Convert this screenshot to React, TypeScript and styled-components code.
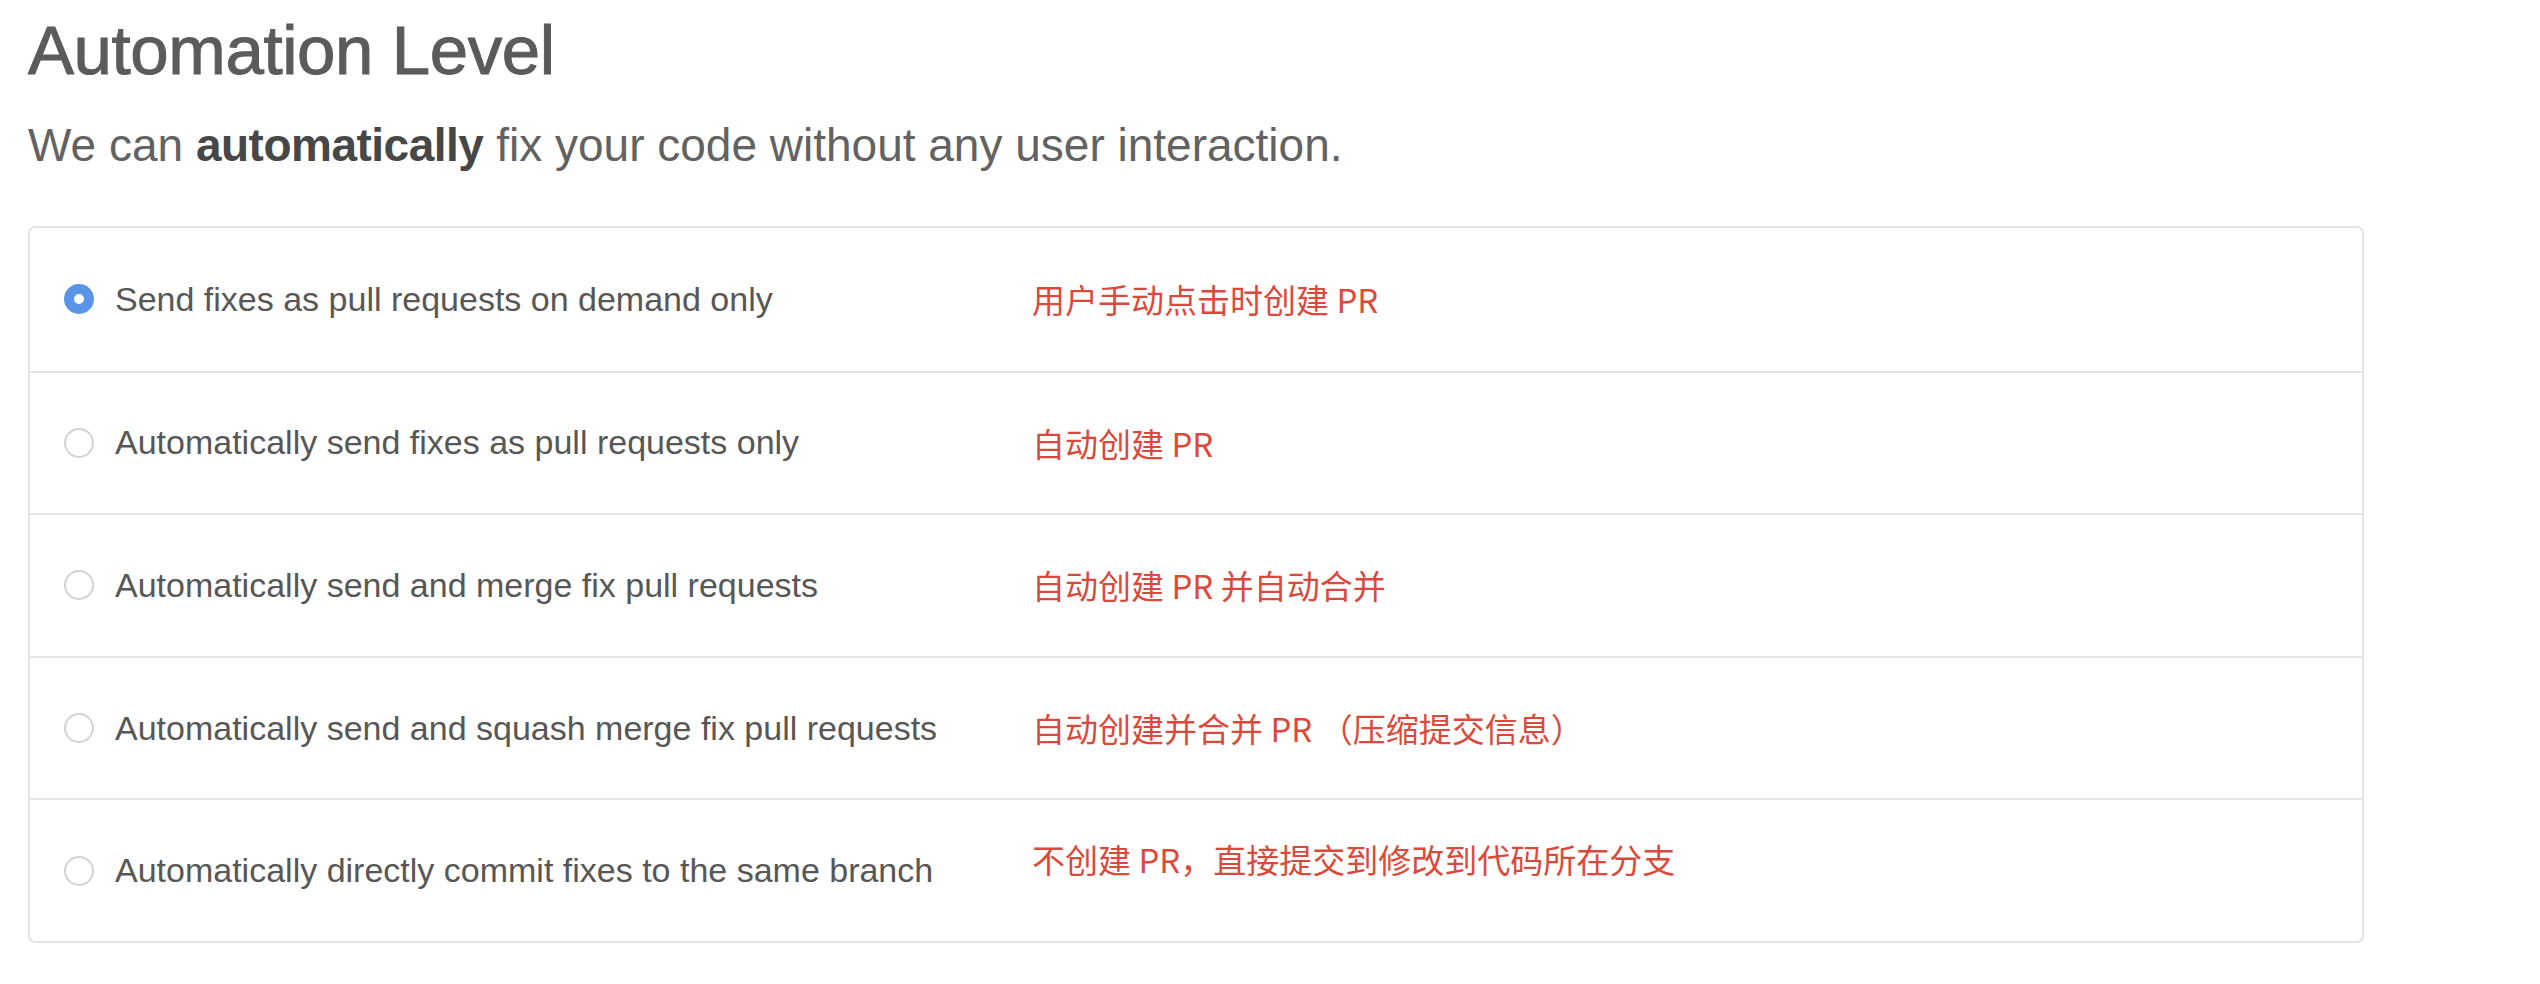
import styled, {createGlobalStyle} from "styled-components";

const GlobalStyle = createGlobalStyle`
    * {
        box-sizing: border-box;
    }

    body {
        margin: 0;
        background: #ffffff;
        font-family: "Liberation Sans", Arial, sans-serif;
    }
`

type Option = {
    label: string
    note: string
    checked?: boolean
    raised?: boolean
}

const options: Option[] = [
    {label: 'Send fixes as pull requests on demand only', note: '用户手动点击时创建 PR', checked: true},
    {label: 'Automatically send fixes as pull requests only', note: '自动创建 PR'},
    {label: 'Automatically send and merge fix pull requests', note: '自动创建 PR 并自动合并'},
    {label: 'Automatically send and squash merge fix pull requests', note: '自动创建并合并 PR （压缩提交信息）'},
    {label: 'Automatically directly commit fixes to the same branch', note: '不创建 PR，直接提交到修改到代码所在分支', raised: true},
]

export default function App() {
    return (
        <>
            <GlobalStyle/>
            <Page>
                <Title>Automation Level</Title>
                <Subtitle>We can <strong>automatically</strong> fix your code without any user interaction.</Subtitle>
                <Card>
                    {options.map((o) => (
                        <Row key={o.label}>
                            <Radio $checked={!!o.checked}/>
                            <Label>{o.label}</Label>
                            <Note $raised={!!o.raised}>{o.note}</Note>
                        </Row>
                    ))}
                </Card>
            </Page>
        </>
    );
}

const Page = styled.main`
    padding: 16px 0 0 28px;
    width: 2364px;
`

const Title = styled.h1`
    margin: 0;
    font-size: 69px;
    line-height: 69px;
    font-weight: 400;
    color: #5b5b5b;
    -webkit-text-stroke: 1px #5b5b5b;
    letter-spacing: -0.4px;
`

const Subtitle = styled.p`
    margin: 37px 0 0;
    font-size: 46px;
    line-height: 46px;
    color: #626262;

    strong {
        color: #474747;
        font-weight: 700;
        letter-spacing: -0.5px;
    }
`

const Card = styled.section`
    margin-top: 58px;
    border: 2px solid #e3e3e3;
    border-radius: 7px;
    background: #fff;
`

const Row = styled.div`
    display: flex;
    align-items: center;
    height: 142.6px;
    padding-left: 34px;

    & + & {
        border-top: 2px solid #e6e6e6;
    }
`

const Radio = styled.span<{ $checked: boolean }>`
    flex-shrink: 0;
    width: 30px;
    height: 30px;
    border-radius: 50%;
    margin-right: 21px;
    background: ${({$checked}) => $checked ? '#5a94e6' : '#fff'};
    border: ${({$checked}) => $checked ? 'none' : '2px solid #d3d3d3'};
    display: flex;
    align-items: center;
    justify-content: center;

    &::after {
        content: '';
        display: ${({$checked}) => $checked ? 'block' : 'none'};
        width: 10px;
        height: 10px;
        border-radius: 50%;
        background: #fff;
    }
`

const Label = styled.span`
    flex-shrink: 0;
    width: 917px;
    font-size: 34px;
    color: #575757;
`

const Note = styled.span<{ $raised: boolean }>`
    font-family: "Noto Sans CJK SC", "Liberation Sans", sans-serif;
    font-size: 33px;
    color: #da4a3c;
    margin-bottom: ${({$raised}) => $raised ? '24px' : '0'};
`
